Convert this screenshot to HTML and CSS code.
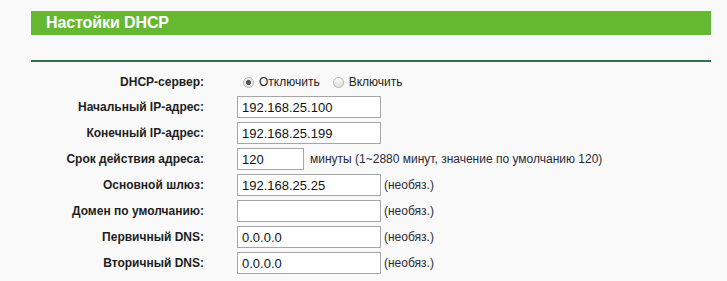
FILE: index.html
```html
<!DOCTYPE html>
<html lang="ru">
<head>
  <meta charset="UTF-8">
  <meta name="viewport" content="width=device-width, initial-scale=1.0">
  <title>Настойки DHCP</title>
  <link rel="stylesheet" href="styles.css">
</head>
<body>
  <div class="panel">
    <div class="panel-title">Настойки DHCP</div>
    <div class="divider"></div>

    <div class="form">
      <div class="row row-radio">
        <label class="label">DHCP-сервер:</label>
        <div class="field">
          <input type="radio" name="dhcp" class="radio radio-first" checked>
          <span class="radio-text">Отключить</span>
          <input type="radio" name="dhcp" class="radio radio-second">
          <span class="radio-text">Включить</span>
        </div>
      </div>
      <div class="row">
        <label class="label">Начальный IP-адрес:</label>
        <div class="field"><input type="text" class="text" value="192.168.25.100"></div>
      </div>
      <div class="row">
        <label class="label">Конечный IP-адрес:</label>
        <div class="field"><input type="text" class="text" value="192.168.25.199"></div>
      </div>
      <div class="row">
        <label class="label">Срок действия адреса:</label>
        <div class="field">
          <input type="text" class="text short" value="120">
          <span class="note note-wide">минуты (1~2880 минут, значение по умолчанию 120)</span>
        </div>
      </div>
      <div class="row">
        <label class="label">Основной шлюз:</label>
        <div class="field">
          <input type="text" class="text" value="192.168.25.25">
          <span class="note">(необяз.)</span>
        </div>
      </div>
      <div class="row">
        <label class="label">Домен по умолчанию:</label>
        <div class="field">
          <input type="text" class="text" value="">
          <span class="note">(необяз.)</span>
        </div>
      </div>
      <div class="row">
        <label class="label">Первичный DNS:</label>
        <div class="field">
          <input type="text" class="text" value="0.0.0.0">
          <span class="note">(необяз.)</span>
        </div>
      </div>
      <div class="row">
        <label class="label">Вторичный DNS:</label>
        <div class="field">
          <input type="text" class="text" value="0.0.0.0">
          <span class="note">(необяз.)</span>
        </div>
      </div>
    </div>
  </div>
</body>
</html>
```

FILE: styles.css
```css
body {
  margin: 0;
  background-color: #f9f9f9;
  font-family: "Liberation Sans", Arial, sans-serif;
  font-size: 12px;
  color: #222;
}
.panel {
  width: 680px;
  margin-left: 31px;
  padding-top: 11px;
}
.panel-title {
  height: 24px;
  line-height: 23px;
  padding-left: 15px;
  background-color: #65b932;
  color: #fff;
  font-weight: bold;
  font-size: 16px;
  letter-spacing: -0.1px;
}
.divider {
  margin-top: 25px;
  height: 2px;
  background-color: #336e50;
}
.form {
  padding-top: 8px;
}
.row {
  display: flex;
  align-items: center;
  height: 26px;
}
.row-radio {
  height: 24px;
}
.label {
  width: 173px;
  text-align: right;
  font-weight: bold;
  color: #1e1e1e;
}
.field {
  display: flex;
  align-items: center;
  margin-left: 33px;
}
.text {
  box-sizing: border-box;
  width: 144px;
  height: 22px;
  margin: 0;
  padding: 0 4px;
  border: 1px solid #a6a6a6;
  background-color: #fff;
  font-family: "Liberation Sans", Arial, sans-serif;
  font-size: 13px;
  color: #111;
}
.text.short {
  width: 67px;
}
.note {
  margin-left: 3px;
  color: #2a2a3a;
}
.note-wide {
  margin-left: 6px;
}
.radio {
  -webkit-appearance: none;
  appearance: none;
  box-sizing: border-box;
  width: 11px;
  height: 11px;
  margin: 0;
  border: 1px solid #b4b4b4;
  border-radius: 50%;
  background: linear-gradient(#fbfbfb, #dedede);
}
.radio:checked {
  background: radial-gradient(circle, #555 0, #555 2.2px, #e6e6e6 2.8px, #f4f4f4 5px);
}
.radio-first {
  margin-left: 6px;
}
.radio-second {
  margin-left: 13px;
}
.radio-text {
  margin-left: 5px;
  color: #1e1e1e;
}
```
